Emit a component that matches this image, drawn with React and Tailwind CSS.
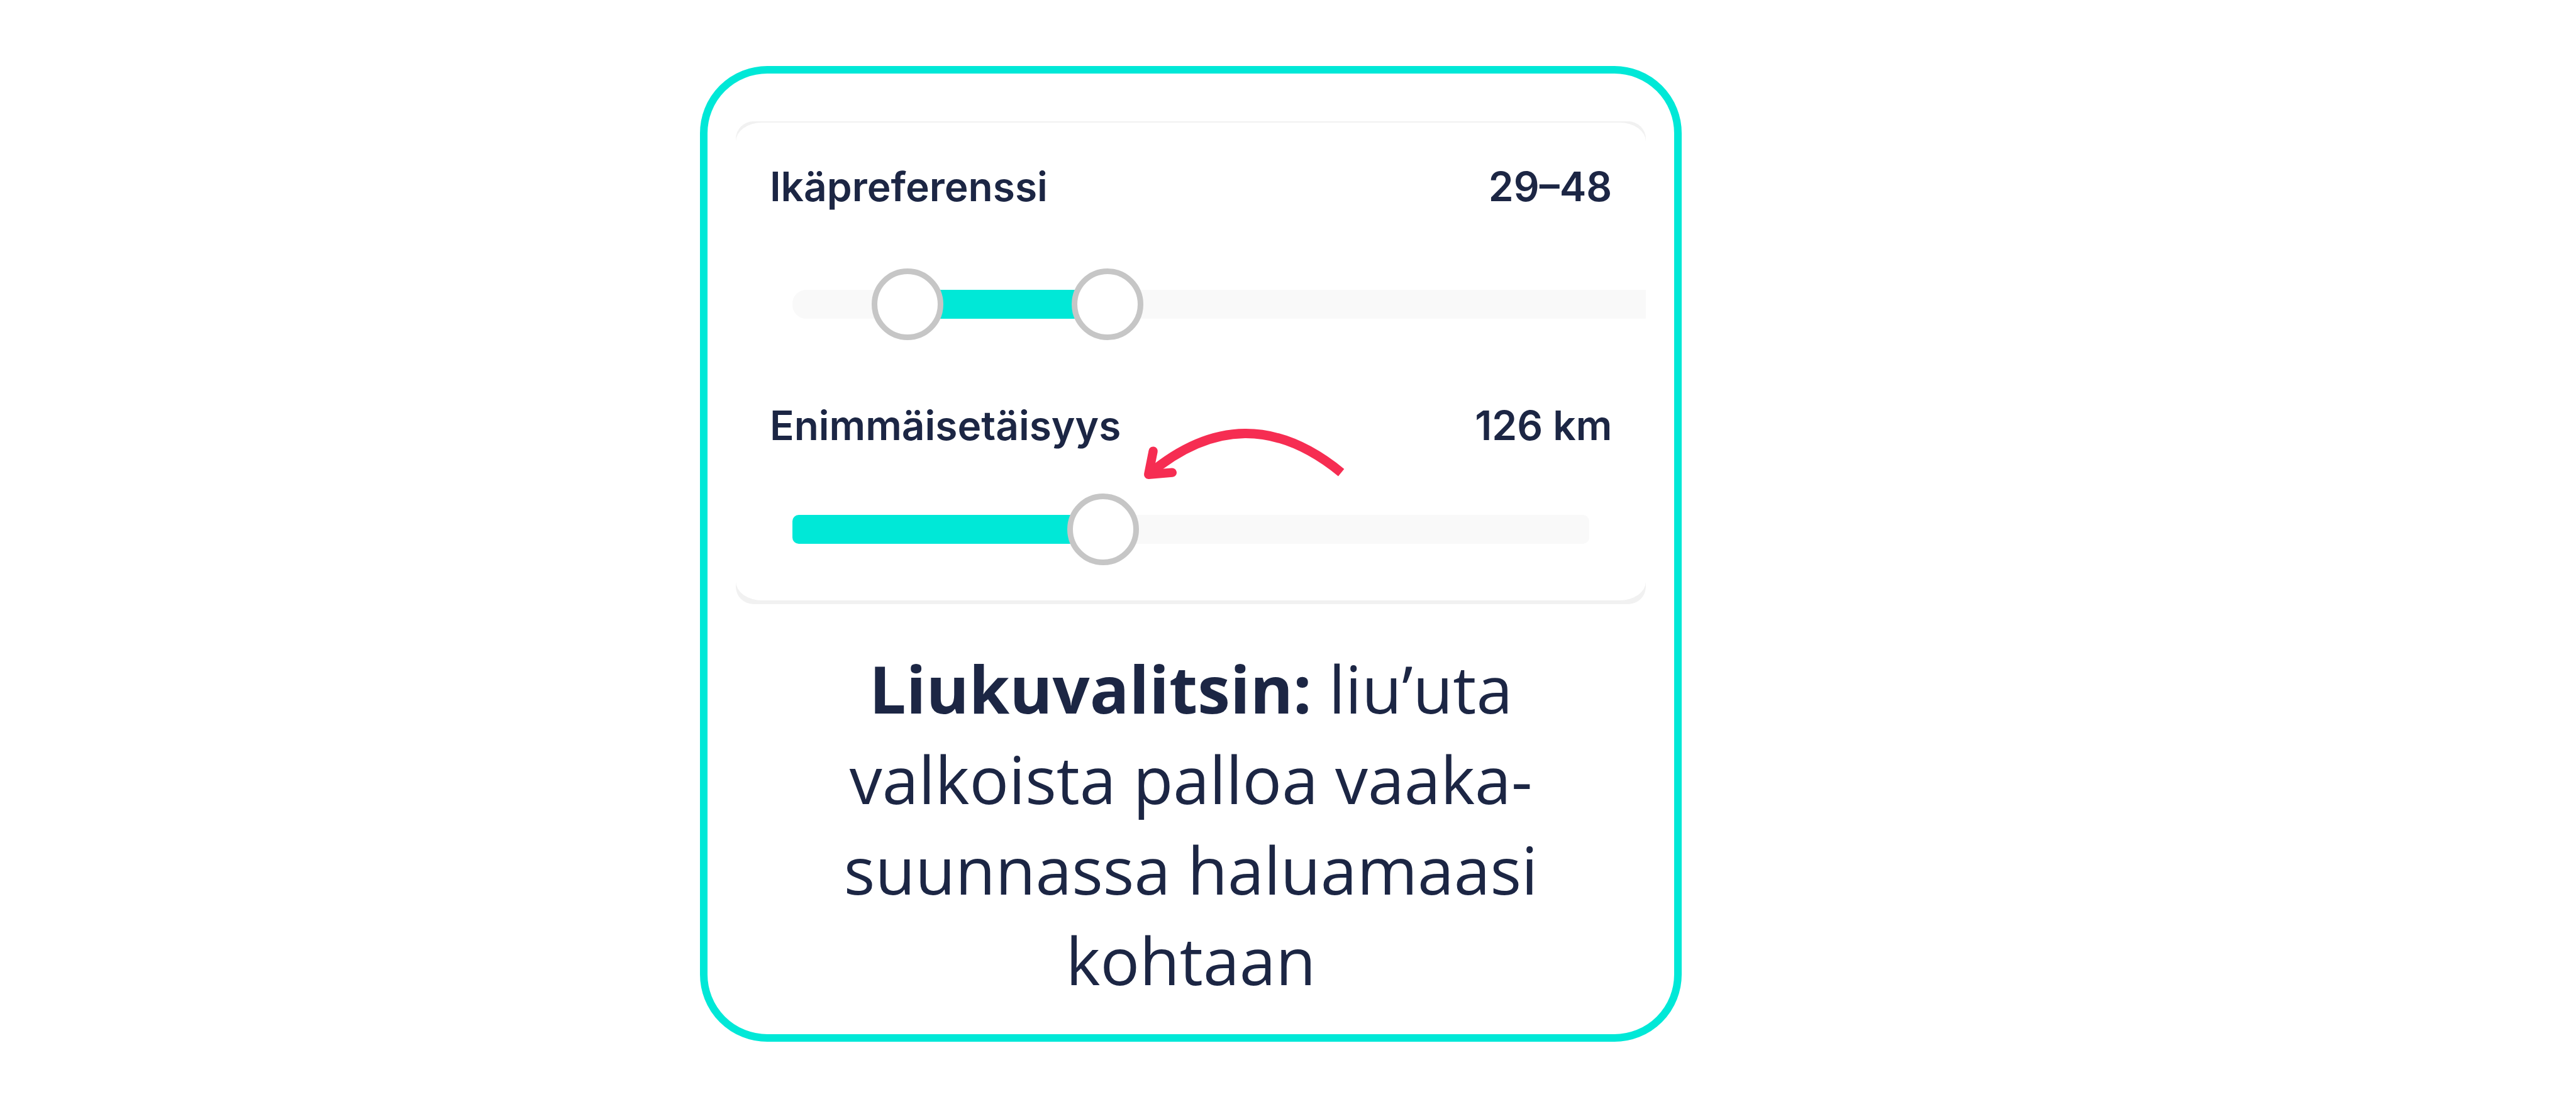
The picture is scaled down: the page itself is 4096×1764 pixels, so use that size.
const rangeInput =
  "absolute -left-[57px] top-0 h-[114px] w-[calc(100%+114px)] appearance-none bg-transparent outline-none pointer-events-none " +
  "[&::-webkit-slider-runnable-track]:h-[114px] [&::-webkit-slider-runnable-track]:bg-transparent " +
  "[&::-webkit-slider-thumb]:pointer-events-auto [&::-webkit-slider-thumb]:box-border [&::-webkit-slider-thumb]:size-[114px] " +
  "[&::-webkit-slider-thumb]:cursor-pointer [&::-webkit-slider-thumb]:appearance-none [&::-webkit-slider-thumb]:rounded-full " +
  "[&::-webkit-slider-thumb]:border-[9px] [&::-webkit-slider-thumb]:border-solid [&::-webkit-slider-thumb]:border-[#c6c6c6] " +
  "[&::-webkit-slider-thumb]:bg-white";

function Heading({ htmlFor, label, value }) {
  return (
    <div className="flex items-center justify-between px-[54px] font-['Inter',sans-serif] text-[64px] leading-[80px] font-semibold">
      <label htmlFor={htmlFor}>{label}</label>
      <output htmlFor={htmlFor}>{value}</output>
    </div>
  );
}

function AgeSlider({ min, max, from, to }) {
  const percent = (v) => ((v - min) / (max - min)) * 100;
  return (
    <div className="ml-[90px] -mr-[11px]">
      <div className="relative flex h-[114px] items-center">
        <div className="h-[46px] w-full overflow-hidden rounded-l-[22px] bg-[#f9f9f9]">
          <div
            className="h-full bg-[#00e8d7]"
            style={{ marginLeft: `${percent(from)}%`, width: `${percent(to) - percent(from)}%` }}
          />
        </div>
        <input id="age-from" type="range" min={min} max={max} defaultValue={from} className={rangeInput} />
        <input aria-label="Ikäpreferenssi, yläraja" type="range" min={min} max={max} defaultValue={to} className={rangeInput} />
      </div>
    </div>
  );
}

function DistanceSlider({ min, max, value }) {
  return (
    <div className="mx-[90px]">
      <div className="relative flex h-[114px] items-center">
        <div className="h-[46px] w-full overflow-hidden rounded-[10px] bg-[#f9f9f9]">
          <div className="h-full bg-[#00e8d7]" style={{ width: `${((value - min) / (max - min)) * 100}%` }} />
        </div>
        <input id="distance" type="range" min={min} max={max} defaultValue={value} className={rangeInput} />
        <Arrow />
      </div>
    </div>
  );
}

function Arrow() {
  return (
    <svg
      aria-hidden="true"
      viewBox="0 0 350 100"
      className="pointer-events-none absolute -top-[113px] left-[43.6%] h-24 w-[336px]"
      fill="none"
      stroke="#f62d52"
      strokeWidth="15.5"
    >
      <path d="M15 86 Q174 -48 334 83" />
      <path d="M22.5 47.5 L14.8 86.2 L54 83" strokeLinecap="round" strokeLinejoin="round" strokeWidth="15" />
    </svg>
  );
}

export default function App() {
  return (
    <main className="flex bg-white py-[105px] text-[#1c2644]">
      <section className="ml-[27.17%] w-[38.12%] rounded-[107px] border-12 border-[#00e8d7] px-[45px] pt-[76px] pb-[46px]">
        <div className="overflow-hidden rounded-[28px] bg-[#f1f1f1] pt-0.5 pb-1.5">
          <div className="rounded-[42px/30px] bg-white pt-[62px] pb-14">
            <Heading htmlFor="age-from" label="Ikäpreferenssi" value="29–48" />
            <div className="pt-[90px]">
              <AgeSlider min={18} max={100} from={29} to={48} />
            </div>
            <div className="pt-24">
              <Heading htmlFor="distance" label="Enimmäisetäisyys" value="126 km" />
            </div>
            <div className="pt-[68px]">
              <DistanceSlider min={2} max={320} value={126} />
            </div>
          </div>
        </div>
        <p className="px-32 pt-[62px] text-center font-['Open_Sans',sans-serif] text-[104px] leading-[144px]">
          <strong className="font-bold">Liukuvalitsin:</strong> liu’uta valkoista palloa vaaka-
          <wbr />
          suunnassa haluamaasi kohtaan
        </p>
      </section>
    </main>
  );
}
